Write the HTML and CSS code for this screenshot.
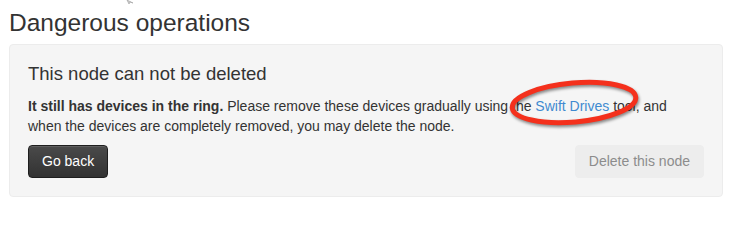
FILE: index.html
```html
<!DOCTYPE html>
<html lang="en">
<head>
<meta charset="utf-8">
<title>Dangerous operations</title>
<link rel="stylesheet" href="styles.css">
</head>
<body>
<div class="page">
  <h3 class="title">Dangerous operations</h3>
  <div class="well">
    <h4 class="subtitle">This node can not be deleted</h4>
    <p class="message"><strong>It still has devices in the ring.</strong> Please remove these devices gradually using the <a href="#" class="link">Swift Drives</a> tool, and when the devices are completely removed, you may delete the node.</p>
    <div class="actions">
      <button class="btn btn-dark" type="button">Go back</button>
      <button class="btn btn-disabled" type="button" disabled>Delete this node</button>
    </div>
  </div>
</div>
<svg class="callout" width="160" height="64" viewBox="0 0 160 64" aria-hidden="true">
  <ellipse cx="76" cy="28.5" rx="62" ry="19.5" transform="rotate(-5 76 28.5)" fill="none" stroke="#f4301c" stroke-width="5"/>
</svg>
<svg class="cursor" width="10" height="6" viewBox="0 0 10 6" aria-hidden="true">
  <path d="M2 0 L4 4 L5 2 L8 3 Z" fill="#d0d0d0" stroke="#9a9a9a" stroke-width="0.6"/>
</svg>
</body>
</html>
```
FILE: styles.css
```css
html, body {
  margin: 0;
  padding: 0;
  background: #ffffff;
}
body {
  font-family: "Liberation Sans", Arial, Helvetica, sans-serif;
  color: #333333;
  font-size: 14px;
  line-height: 20px;
}
.page {
  padding: 8px 8px 0 9px;
  width: 714px;
}
.title {
  margin: 0 0 6px 0;
  font-size: 24.5px;
  line-height: 30px;
  font-weight: normal;
  color: #333333;
}
.well {
  background: #f5f5f5;
  border: 1px solid #ececec;
  border-radius: 4px;
  padding: 19px 18px 18px 18px;
}
.subtitle {
  margin: 0 0 12px 0;
  font-size: 18.5px;
  line-height: 20px;
  font-weight: normal;
  color: #333333;
}
.message {
  margin: 0 0 9px 0;
  max-width: 650px;
  font-size: 14px;
  line-height: 20px;
  color: #333333;
}
.message strong {
  font-weight: bold;
}
.link {
  color: #3f8ad0;
  text-decoration: none;
}
.actions {
  display: flex;
  justify-content: space-between;
  align-items: center;
}
.btn {
  font-family: "Liberation Sans", Arial, Helvetica, sans-serif;
  font-size: 14px;
  line-height: 19px;
  padding: 6px 13px;
  border-radius: 4px;
  margin: 0;
}
.btn-dark {
  color: #ffffff;
  background: linear-gradient(#4a4a4a, #323232);
  border: 1px solid #1e1e1e;
  box-shadow: inset 0 1px 0 rgba(255,255,255,0.12);
}
.btn-disabled {
  color: #8c8c8c;
  background: #ededed;
  border: 1px solid #ededed;
}
.callout {
  position: absolute;
  left: 498px;
  top: 74px;
  overflow: visible;
  filter: drop-shadow(1px 2px 1.5px rgba(0,0,0,0.45));
}
.cursor {
  position: absolute;
  left: 125px;
  top: 0;
}
```
